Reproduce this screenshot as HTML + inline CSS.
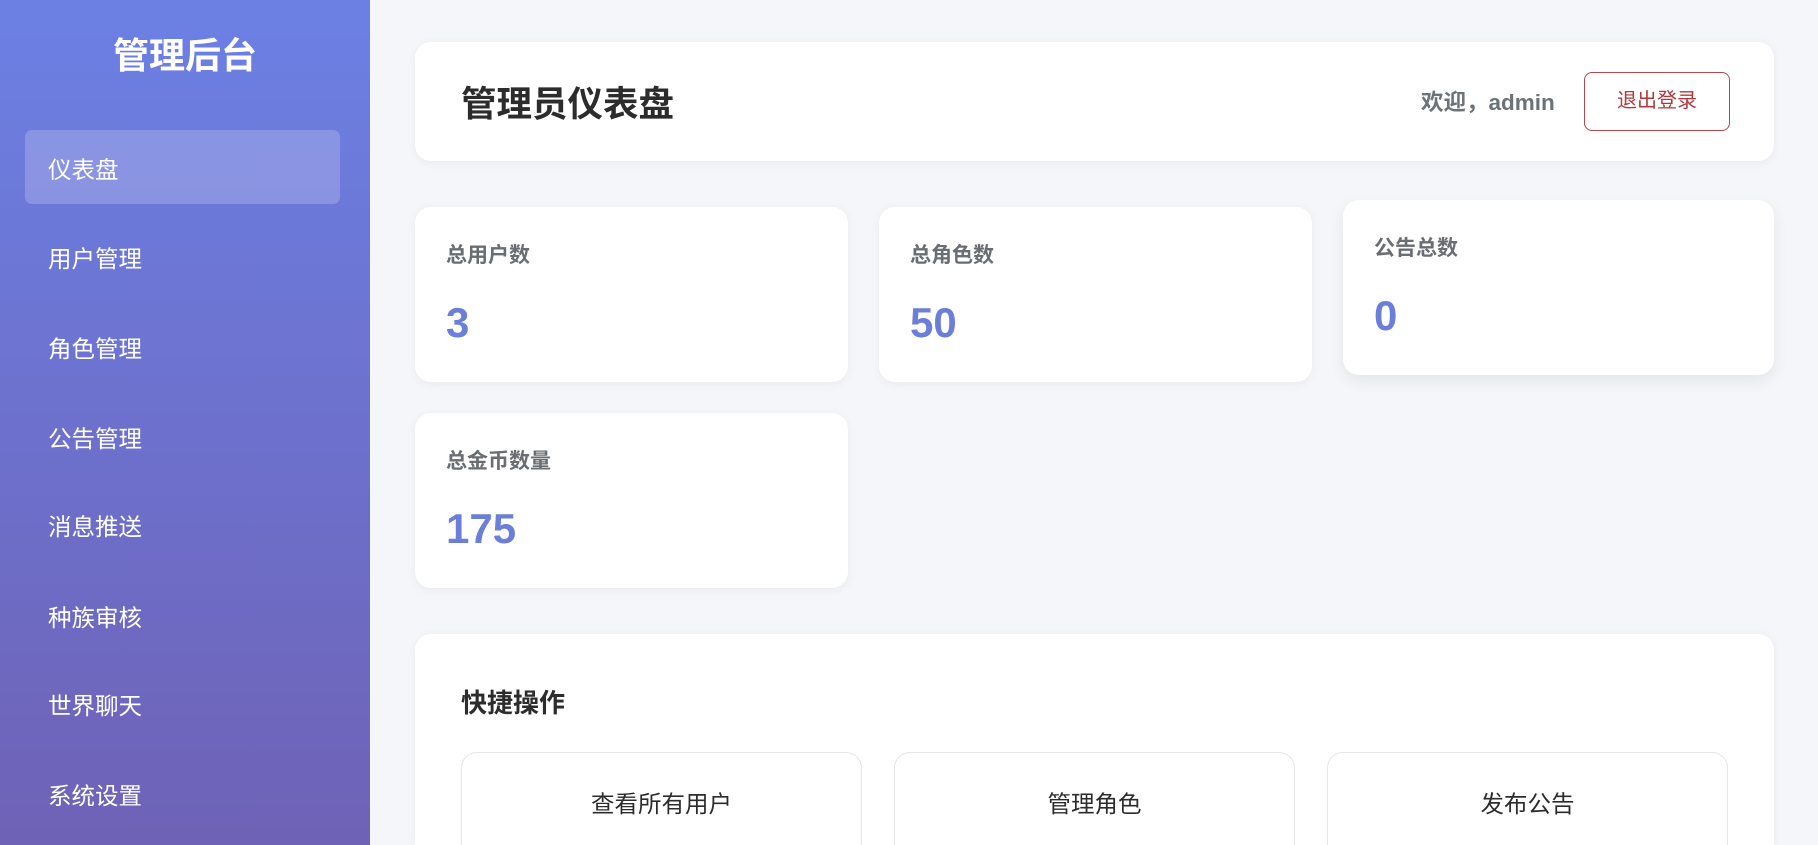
<!DOCTYPE html>
<html><head><meta charset="utf-8"><style>
*{margin:0;padding:0;box-sizing:border-box}
html,body{width:1818px;height:845px;overflow:hidden;background:#f5f6fa;font-family:"Liberation Sans","Noto Sans CJK SC",sans-serif}
.sb{position:absolute;left:0;top:0;width:370px;height:845px;background:linear-gradient(180deg,#6c80e4 0%,#6e62b6 100%)}
.sb h1{position:absolute;top:34px;width:370px;text-align:center;color:#fff;font-size:36px;font-weight:bold;line-height:44px}
.act{position:absolute;left:25px;top:130px;width:315px;height:74px;background:rgba(255,255,255,.2);border-radius:7px}
.nav{position:absolute;left:48px;color:#fff;font-size:23.5px;line-height:30px;font-weight:normal}
.card{position:absolute;background:#fff;border-radius:16px;box-shadow:0 2px 10px rgba(0,0,0,.05)}
.hdr h2{position:absolute;left:46px;top:40px;font-size:35.5px;line-height:44px;color:#2c2c2c;font-weight:bold}
.wel{position:absolute;left:1421px;top:89px;font-size:22.5px;line-height:28px;color:#6b7378;font-weight:bold}
.out{position:absolute;left:1584px;top:72px;width:146px;height:59px;border:1.5px solid #b2474e;border-radius:8px;color:#b0393f;font-size:20px;text-align:center;line-height:56px}
.lbl{position:absolute;left:31px;top:36px;font-size:21px;font-weight:bold;color:#6a6e72;line-height:26px}
.val{position:absolute;left:31px;top:91px;font-size:42px;font-weight:bold;color:#6b7ed8;line-height:50px}
.qt{position:absolute;left:46px;top:52px;font-size:26px;font-weight:bold;color:#2c2c2c;line-height:34px}
.btn{position:absolute;top:118px;width:401px;height:110px;border:1px solid #e6e6ea;border-radius:16px;text-align:center;font-size:23.5px;line-height:102px;color:#2c2c2c}
</style></head><body>
<div class="sb">
<h1>管理后台</h1>
<div class="act"></div>
<div class="nav" style="top:155px">仪表盘</div>
<div class="nav" style="top:244px">用户管理</div>
<div class="nav" style="top:334px">角色管理</div>
<div class="nav" style="top:424px">公告管理</div>
<div class="nav" style="top:512px">消息推送</div>
<div class="nav" style="top:603px">种族审核</div>
<div class="nav" style="top:691px">世界聊天</div>
<div class="nav" style="top:781px">系统设置</div>
</div>
<div class="card hdr" style="left:415px;top:42px;width:1359px;height:119px"><h2>管理员仪表盘</h2></div>
<div class="wel">欢迎，admin</div>
<div class="out">退出登录</div>
<div class="card" style="left:415px;top:207px;width:433px;height:175px"><div class="lbl">总用户数</div><div class="val">3</div></div>
<div class="card" style="left:879px;top:207px;width:433px;height:175px"><div class="lbl">总角色数</div><div class="val">50</div></div>
<div class="card" style="left:1343px;top:200px;width:431px;height:175px;box-shadow:0 6px 16px rgba(0,0,0,.07)"><div class="lbl">公告总数</div><div class="val">0</div></div>
<div class="card" style="left:415px;top:413px;width:433px;height:175px"><div class="lbl">总金币数量</div><div class="val">175</div></div>
<div class="card" style="left:415px;top:634px;width:1359px;height:211px;border-radius:16px 16px 0 0;overflow:hidden">
<div class="qt">快捷操作</div>
<div class="btn" style="left:46px">查看所有用户</div>
<div class="btn" style="left:479px">管理角色</div>
<div class="btn" style="left:912px">发布公告</div>
</div>
</body></html>
